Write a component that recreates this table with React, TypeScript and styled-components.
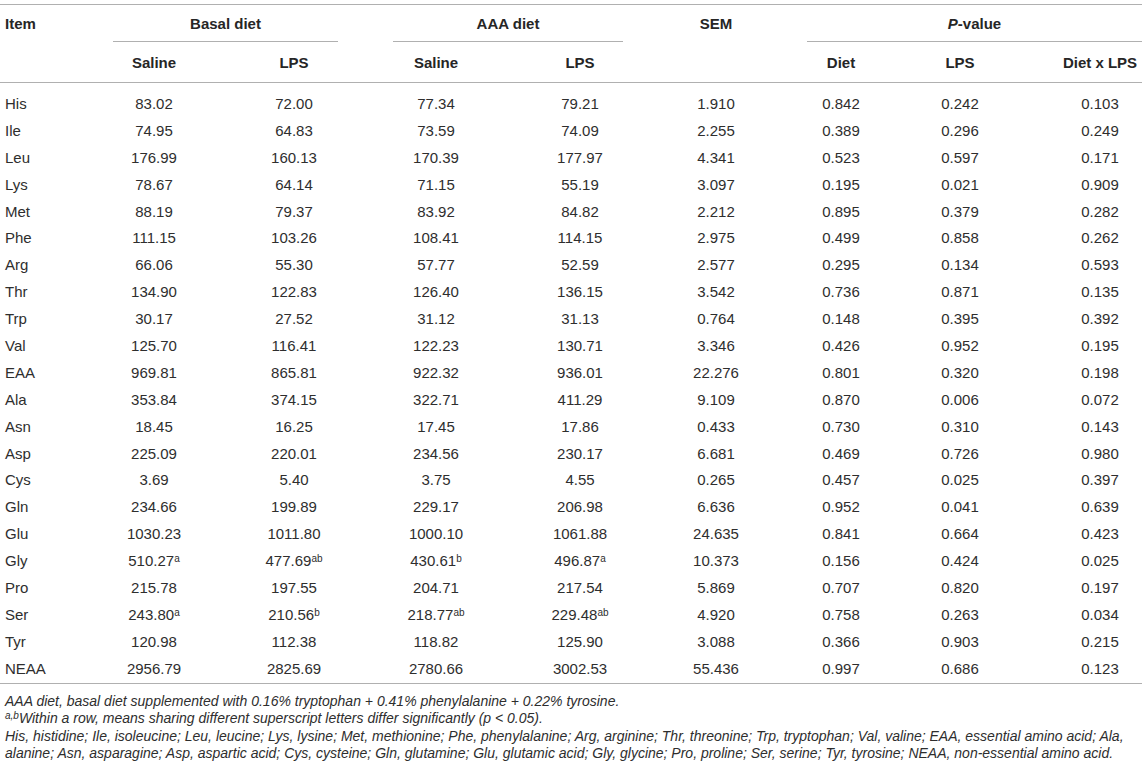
import React from "react";
import styled, { createGlobalStyle } from "styled-components";

const GlobalStyle = createGlobalStyle`
  html, body { margin: 0; padding: 0; background: #ffffff; }
  body { font-family: "Liberation Sans", Arial, Helvetica, sans-serif; color: #2e2e2e; }
`;

const COLS = "84px 140px 140px 144px 144px 128px 122px 116px 124px";
const LINE = "1px solid #b0b0b0";

const Page = styled.div`
  width: 1142px;
  padding-top: 4px;
`;

const Header = styled.div`
  display: grid;
  grid-template-columns: ${COLS};
  grid-template-rows: 37px 40px;
  border-top: ${LINE};
  border-bottom: ${LINE};
  font-size: 15px;
  font-weight: bold;
  color: #262626;
`;

const HeadCell = styled.div<{ $col: string; $row: number; $align?: "left" | "center"; $padLeft?: number }>`
  grid-column: ${(p) => p.$col};
  grid-row: ${(p) => p.$row};
  display: flex;
  align-items: center;
  justify-content: ${(p) => (p.$align === "left" ? "flex-start" : "center")};
  padding-left: ${(p) => p.$padLeft ?? 0}px;
  white-space: nowrap;
`;

const GroupCell = styled.div<{ $col: string; $mr: number; $ml: number }>`
  grid-column: ${(p) => p.$col};
  grid-row: 1;
  display: flex;
  align-items: center;
  justify-content: center;
  margin-left: ${(p) => p.$ml}px;
  margin-right: ${(p) => p.$mr}px;
  border-bottom: ${LINE};
  white-space: nowrap;
`;

const Body = styled.div`
  padding: 7px 0 1px;
  border-bottom: ${LINE};
`;

const Row = styled.div`
  display: grid;
  grid-template-columns: ${COLS};
  height: 26.9px;
  align-items: center;
  font-size: 15px;
`;

const Cell = styled.div<{ $first?: boolean; $last?: boolean }>`
  text-align: ${(p) => (p.$first ? "left" : "center")};
  padding-left: ${(p) => (p.$first ? 5 : p.$last ? 40 : 0)}px;
  white-space: nowrap;
`;

const Sup = styled.sup`
  font-size: 10px;
  vertical-align: 4px;
  line-height: 0;
`;

const Italic = styled.i`
  font-style: italic;
`;

const Notes = styled.div`
  padding: 9px 0 0 5px;
  font-size: 14px;
  line-height: 17.5px;
  font-style: italic;
  color: #2e2e2e;
`;

const Note = styled.p`
  margin: 0;
`;

type V = string | [string, string];

const rows: [string, V, V, V, V, string, string, string, string][] = [
  ["His", "83.02", "72.00", "77.34", "79.21", "1.910", "0.842", "0.242", "0.103"],
  ["Ile", "74.95", "64.83", "73.59", "74.09", "2.255", "0.389", "0.296", "0.249"],
  ["Leu", "176.99", "160.13", "170.39", "177.97", "4.341", "0.523", "0.597", "0.171"],
  ["Lys", "78.67", "64.14", "71.15", "55.19", "3.097", "0.195", "0.021", "0.909"],
  ["Met", "88.19", "79.37", "83.92", "84.82", "2.212", "0.895", "0.379", "0.282"],
  ["Phe", "111.15", "103.26", "108.41", "114.15", "2.975", "0.499", "0.858", "0.262"],
  ["Arg", "66.06", "55.30", "57.77", "52.59", "2.577", "0.295", "0.134", "0.593"],
  ["Thr", "134.90", "122.83", "126.40", "136.15", "3.542", "0.736", "0.871", "0.135"],
  ["Trp", "30.17", "27.52", "31.12", "31.13", "0.764", "0.148", "0.395", "0.392"],
  ["Val", "125.70", "116.41", "122.23", "130.71", "3.346", "0.426", "0.952", "0.195"],
  ["EAA", "969.81", "865.81", "922.32", "936.01", "22.276", "0.801", "0.320", "0.198"],
  ["Ala", "353.84", "374.15", "322.71", "411.29", "9.109", "0.870", "0.006", "0.072"],
  ["Asn", "18.45", "16.25", "17.45", "17.86", "0.433", "0.730", "0.310", "0.143"],
  ["Asp", "225.09", "220.01", "234.56", "230.17", "6.681", "0.469", "0.726", "0.980"],
  ["Cys", "3.69", "5.40", "3.75", "4.55", "0.265", "0.457", "0.025", "0.397"],
  ["Gln", "234.66", "199.89", "229.17", "206.98", "6.636", "0.952", "0.041", "0.639"],
  ["Glu", "1030.23", "1011.80", "1000.10", "1061.88", "24.635", "0.841", "0.664", "0.423"],
  ["Gly", ["510.27", "a"], ["477.69", "ab"], ["430.61", "b"], ["496.87", "a"], "10.373", "0.156", "0.424", "0.025"],
  ["Pro", "215.78", "197.55", "204.71", "217.54", "5.869", "0.707", "0.820", "0.197"],
  ["Ser", ["243.80", "a"], ["210.56", "b"], ["218.77", "ab"], ["229.48", "ab"], "4.920", "0.758", "0.263", "0.034"],
  ["Tyr", "120.98", "112.38", "118.82", "125.90", "3.088", "0.366", "0.903", "0.215"],
  ["NEAA", "2956.79", "2825.69", "2780.66", "3002.53", "55.436", "0.997", "0.686", "0.123"],
];

const renderValue = (v: V) =>
  Array.isArray(v) ? (
    <>
      {v[0]}
      <Sup>{v[1]}</Sup>
    </>
  ) : (
    v
  );

export default function App() {
  return (
    <>
      <GlobalStyle />
      <Page>
        <Header>
          <HeadCell $col="1" $row={1} $align="left" $padLeft={5}>Item</HeadCell>
          <GroupCell $col="2 / 4" $ml={29} $mr={26}>Basal diet</GroupCell>
          <GroupCell $col="4 / 6" $ml={29} $mr={29}>AAA diet</GroupCell>
          <HeadCell $col="6" $row={1}>SEM</HeadCell>
          <GroupCell $col="7 / 10" $ml={27} $mr={0}>
            <Italic>P</Italic>-value
          </GroupCell>
          <HeadCell $col="2" $row={2}>Saline</HeadCell>
          <HeadCell $col="3" $row={2}>LPS</HeadCell>
          <HeadCell $col="4" $row={2}>Saline</HeadCell>
          <HeadCell $col="5" $row={2}>LPS</HeadCell>
          <HeadCell $col="7" $row={2}>Diet</HeadCell>
          <HeadCell $col="8" $row={2}>LPS</HeadCell>
          <HeadCell $col="9" $row={2} $padLeft={40}>Diet x LPS</HeadCell>
        </Header>
        <Body>
          {rows.map((r) => (
            <Row key={r[0]}>
              {r.map((v, i) => (
                <Cell key={i} $first={i === 0} $last={i === 8}>
                  {renderValue(v)}
                </Cell>
              ))}
            </Row>
          ))}
        </Body>
        <Notes>
          <Note>AAA diet, basal diet supplemented with 0.16% tryptophan + 0.41% phenylalanine + 0.22% tyrosine.</Note>
          <Note>
            <Sup>a,b</Sup>Within a row, means sharing different superscript letters differ significantly (p &lt; 0.05).
          </Note>
          <Note>
            His, histidine; Ile, isoleucine; Leu, leucine; Lys, lysine; Met, methionine; Phe, phenylalanine; Arg, arginine; Thr, threonine; Trp, tryptophan; Val, valine; EAA, essential amino acid; Ala, alanine; Asn, asparagine; Asp, aspartic acid; Cys, cysteine; Gln, glutamine; Glu, glutamic acid; Gly, glycine; Pro, proline; Ser, serine; Tyr, tyrosine; NEAA, non-essential amino acid.
          </Note>
        </Notes>
      </Page>
    </>
  );
}
